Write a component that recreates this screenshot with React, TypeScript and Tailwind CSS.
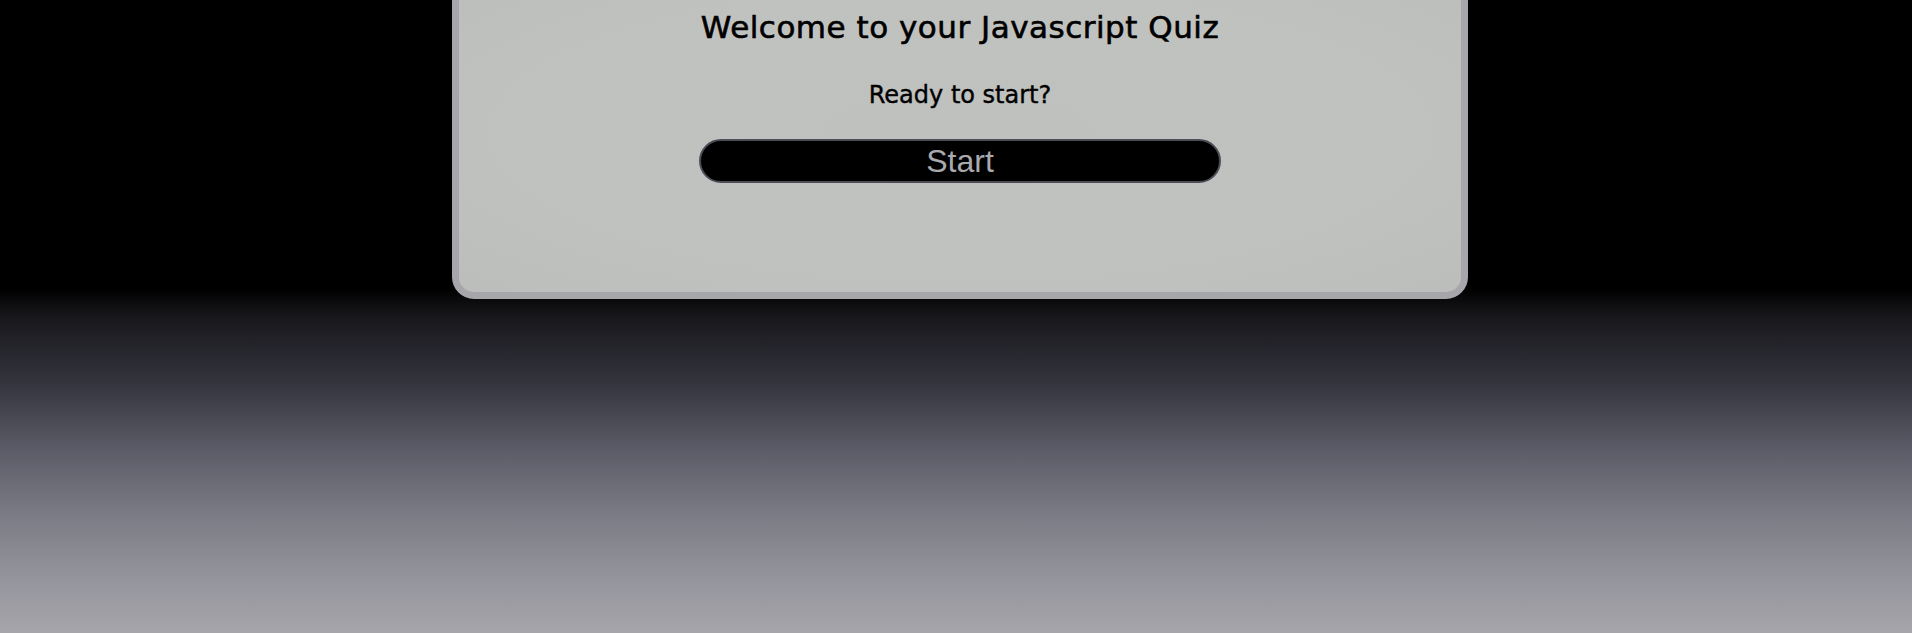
export default function App() {
  return (
    <div className="min-h-[633px] h-[633px] overflow-hidden bg-[linear-gradient(to_bottom,#000_0px,#000_288px,#18181c_317px,#34343e_383px,#5c5c68_450px,#7c7c86_517px,#96969e_583px,#a6a5aa_633px)] flex justify-center pl-[8px]">
      <div className="w-[1016px] h-[331px] -mt-[32px] shrink-0 rounded-[22px] border-[7px] border-[#a7a6ab] bg-[radial-gradient(ellipse_at_center,#bfc1bf_0%,#c0c2c0_60%,#bcbebc_100%)] flex flex-col items-center pt-[33px]">
        <h1 className="font-['Comic_Sans_MS','DejaVu_Sans',sans-serif] text-[31px] leading-[38px] text-black tracking-[0.5px] [-webkit-text-stroke:0.6px_black]">
          Welcome to your Javascript Quiz
        </h1>
        <p className="mt-[34px] font-['Comic_Sans_MS','DejaVu_Sans',sans-serif] text-[24px] leading-[30px] text-black [-webkit-text-stroke:0.4px_black]">
          Ready to start?
        </p>
        <button className="mt-[29px] w-[522px] h-[44px] rounded-full bg-black border-2 border-[#4d4d57] font-['Liberation_Sans',Arial,sans-serif] text-[32px] leading-[38px] text-[#a9a9ae]">
          Start
        </button>
      </div>
    </div>
  );
}
